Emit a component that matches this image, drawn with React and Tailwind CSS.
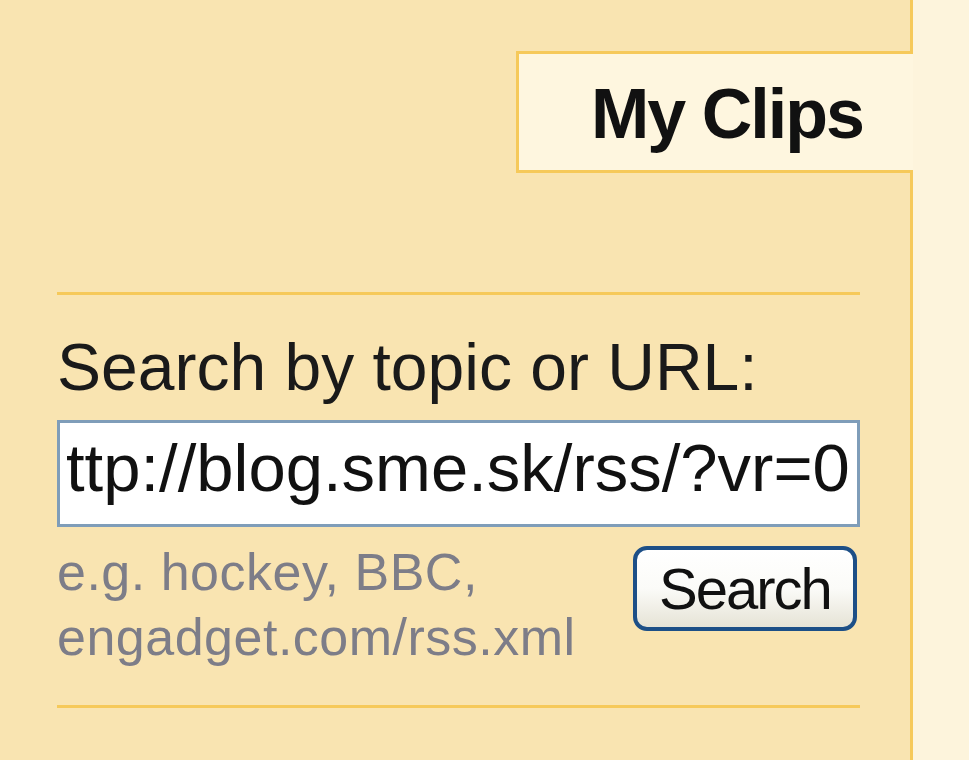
export default function App() {
    return (
        <div className="flex h-[760px] w-[969px] overflow-hidden bg-[#fdf4dc] font-['Liberation_Sans',Arial,sans-serif]">
            <div className="flex w-[913px] flex-col">
                {/* panel above the tab */}
                <div className="h-[51px] shrink-0 border-r-[3px] border-[#f6c95a] bg-[#f9e4b1]" />

                {/* tab row */}
                <div className="flex h-[122px] shrink-0">
                    <div className="w-[516px] bg-[#f9e4b1]" />
                    <div className="flex-1 border-y-[3px] border-l-[3px] border-[#f6c95a] bg-[#fef6df] pl-[72px] pt-[8px]">
                        <span className="text-[70px] font-bold leading-normal tracking-[-2px] text-[#111]">My Clips</span>
                    </div>
                </div>

                {/* search panel */}
                <div className="flex-1 border-r-[3px] border-[#f6c95a] bg-[#f9e4b1] pl-[57px] pr-[50px] pt-[119px]">
                    <div className="h-[3px] bg-[#f6c95a]" />

                    <div className="mt-[23px] text-[66px] leading-normal text-[#1a1a1a]">Search by topic or URL:</div>

                    <div className="mt-[3px] h-[107px] overflow-hidden whitespace-nowrap border-[3px] border-[#7f9db9] bg-white pl-[6px] pt-[10px] text-[67px] leading-[69px] text-[#111]">
                        ttp://blog.sme.sk/rss/?vr=0
                    </div>

                    <div className="mt-[13px] flex items-start justify-between">
                        <p className="text-[52px] leading-[65px] tracking-[0.5px] text-[#7d7d88]">
                            e.g. hockey, BBC,
                            <br />
                            engadget.com/rss.xml
                        </p>
                        <button className="mr-[3px] mt-[6px] flex h-[85px] w-[224px] items-center justify-center rounded-[14px] border-[4px] border-[#1d4f87] bg-gradient-to-b from-white via-[#fbfbf8] to-[#e6e3d6] text-[58px] leading-none tracking-[-2px] text-[#111]">
                            Search
                        </button>
                    </div>

                    <div className="mt-[35px] h-[3px] bg-[#f6c95a]" />
                </div>
            </div>
            <div className="flex-1" />
        </div>
    );
}
